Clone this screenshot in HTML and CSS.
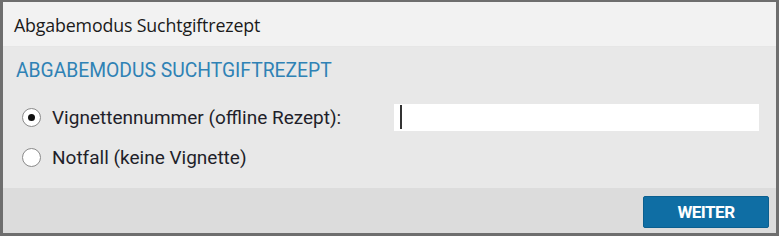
FILE: index.html
```html
<!DOCTYPE html>
<html lang="de">
<head>
<meta charset="utf-8">
<title>Abgabemodus Suchtgiftrezept</title>
<link rel="stylesheet" href="styles.css">
</head>
<body>
<div class="dialog">
  <div class="titlebar">Abgabemodus Suchtgiftrezept</div>
  <div class="content">
    <h2 class="heading">ABGABEMODUS SUCHTGIFTREZEPT</h2>
    <div class="options">
      <label class="option">
        <span class="radio checked"></span>
        <span class="label">Vignettennummer (offline Rezept):</span>
      </label>
      <div class="field"><span class="caret"></span></div>
      <label class="option">
        <span class="radio"></span>
        <span class="label">Notfall (keine Vignette)</span>
      </label>
    </div>
  </div>
  <div class="footer">
    <button class="btn" type="button">WEITER</button>
  </div>
</div>
</body>
</html>
```

FILE: styles.css
```css
html, body {
  margin: 0;
  padding: 0;
  background: #ffffff;
}

.dialog {
  width: 779px;
  height: 236px;
  box-sizing: border-box;
  border-style: solid;
  border-color: #6e6e6e;
  border-width: 2px 3px 3px 3px;
  display: flex;
  flex-direction: column;
  background: #e8e8e8;
}

.titlebar {
  height: 45px;
  box-sizing: border-box;
  background: #f2f2f2;
  padding-left: 11px;
  padding-top: 1px;
  display: flex;
  align-items: center;
  font-family: "Open Sans", "Noto Sans", sans-serif;
  font-size: 17.8px;
  letter-spacing: -0.15px;
  color: #1a1a1a;
  border-bottom: 1px solid #e6e6e6;
}

.content {
  flex: 1;
  background: #e8e8e8;
  padding: 12px 0 0 13px;
}

.heading {
  margin: 0;
  font-family: Roboto, "Liberation Sans", sans-serif;
  font-weight: 400;
  font-size: 19.3px;
  color: #2f82b5;
  line-height: 24px;
}

.options {
  display: grid;
  grid-template-columns: 378px 365px;
  grid-template-rows: 40px 40px;
  align-items: center;
  margin-top: 14px;
}

.option {
  display: flex;
  align-items: center;
  gap: 11px;
  padding-left: 6px;
  font-family: Roboto, "Liberation Sans", sans-serif;
  font-size: 19px;
  color: #1f1f2a;
}

.radio {
  width: 17px;
  height: 17px;
  border-radius: 50%;
  border: 1px solid #8a8a8a;
  background: #ffffff;
  display: flex;
  align-items: center;
  justify-content: center;
  flex: none;
}

.radio.checked::after {
  content: "";
  width: 7px;
  height: 7px;
  border-radius: 50%;
  background: #111111;
}

.field {
  height: 27px;
  background: #ffffff;
  display: flex;
  align-items: center;
  padding-left: 6px;
}

.caret {
  width: 2px;
  height: 24px;
  background: #333333;
}

.footer {
  height: 45px;
  box-sizing: border-box;
  background: #dcdcdc;
  display: flex;
  justify-content: flex-end;
  align-items: flex-start;
  padding: 8px 7px 0 0;
}

.btn {
  width: 126px;
  height: 32px;
  border: 1px solid #0b5f8f;
  border-radius: 2px;
  background: #0f6ea4;
  color: #ffffff;
  font-family: Roboto, "Liberation Sans", sans-serif;
  font-weight: 700;
  font-size: 17px;
  letter-spacing: -0.5px;
  padding: 0;
}
```
